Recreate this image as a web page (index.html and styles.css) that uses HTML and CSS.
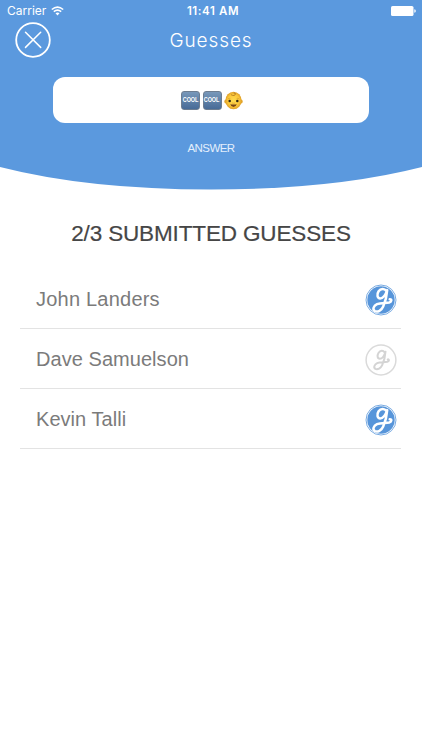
FILE: index.html
```
<!DOCTYPE html>
<html lang="en">
<head>
<meta charset="utf-8">
<title>Guesses</title>
<link rel="stylesheet" href="styles.css">
</head>
<body>
<header class="hero">
  <svg class="curve" viewBox="0 0 422 190"><path d="M0 0H422V167Q334 189.5 211 189.5Q88 189.5 0 167Z" fill="#5b99de"/></svg>
  <div class="status">
    <span class="carrier"><span class="carrier-name">Carrier</span>
      <svg width="13" height="10" viewBox="0 0 13 10" fill="none" stroke="#fff" stroke-width="1.6"><path d="M.8 3.5Q6.5-1.2 12.2 3.5M2.8 5.7Q6.5 2.6 10.2 5.7"/><path d="M4.5 7.3Q6.5 5.8 8.5 7.3L6.5 9.5Z" fill="#fff" stroke="none"/></svg>
    </span>
    <b class="time">11:41 AM</b>
    <svg class="battery" width="25" height="10" viewBox="0 0 25 10" fill="#fff"><rect width="22.5" height="10" rx="1.6"/><path d="M23.3 3.3Q24.8 3.5 24.8 5T23.3 6.7Z"/></svg>
  </div>
  <div class="nav">
    <svg class="close" width="36" height="36" viewBox="0 0 36 36" fill="none" stroke="#fff"><circle cx="18" cy="18" r="16.8" stroke-width="1.8"/><path d="M10.5 10.2L25.7 25.4M25.7 10.2L10.5 25.4" stroke-width="1.5" stroke-linecap="round"/></svg>
    <h1 class="title">Guesses</h1>
  </div>
  <div class="answer">
    <span class="tile"><span class="cool-text">COOL</span></span>
    <span class="tile"><span class="cool-text">COOL</span></span>
    <svg width="19" height="19" viewBox="0 0 19 19">
      <radialGradient id="skin"><stop offset="0" stop-color="#ffdc50"/><stop offset=".7" stop-color="#fbc638"/><stop offset="1" stop-color="#dfa02a"/></radialGradient>
      <ellipse cx="1.8" cy="10.6" rx="1.5" ry="2" fill="#e3a52c"/><ellipse cx="17.2" cy="10.6" rx="1.5" ry="2" fill="#e3a52c"/>
      <ellipse cx="9.5" cy="9.5" rx="8.1" ry="8.7" fill="url(#skin)"/>
      <path d="M7 3.7Q10.8 5.7 11.4 3Q11.5 1.5 9.7 2" fill="none" stroke="#a06a1c" stroke-width=".7"/>
      <path d="M4 7.8Q5 7 6.3 7.5M12.7 7.5Q14 7 15 7.8" fill="none" stroke="#c98f28" stroke-width=".5"/>
      <circle cx="5.7" cy="10" r="1.25" fill="#302714"/><circle cx="13.3" cy="10" r="1.25" fill="#302714"/>
      <path d="M6.3 13.2Q9.5 14 12.7 13.2Q11.9 16 9.5 16T6.3 13.2Z" fill="#784518"/><path d="M8 11.9Q9.5 12.6 11 11.9" fill="none" stroke="#d0912a" stroke-width=".5"/>
    </svg>
  </div>
  <div class="label"><span>ANSWER</span></div>
</header>
<main>
  <h2 class="heading"><span>2/3 SUBMITTED GUESSES</span></h2>
  <ul class="list">
    <li class="row"><span class="name wide">John Landers</span>
      <svg class="badge on" width="32" height="32" viewBox="0 0 32 32">
        <g id="logo">
          <circle cx="16" cy="16" r="15" fill="none" stroke="currentColor" stroke-width=".8"/>
          <circle class="disc" cx="16" cy="16" r="13.7"/>
          <path class="script" d="M21.2 7C19.6 4.2 15.7 4.3 13.6 7.2C11.5 10.4 12.3 14.4 15.2 14.4C18 14.4 20.6 10.8 22.2 6.1C21.8 12 20.2 18 18.2 22.5C16.5 26.5 12.6 28.4 9.9 27C7 25.3 8.7 21.8 12 20.2C15.6 18.5 20.2 19.2 24.2 18.5C27 17.7 26.9 15 24.7 15.3"/>
        </g>
      </svg></li>
    <li class="row"><span class="name">Dave Samuelson</span>
      <svg class="badge off" width="32" height="32" viewBox="0 0 32 32">
        <circle cx="16" cy="16" r="14.9" fill="none" stroke="currentColor" stroke-width="1.5"/>
        <path class="script" d="M19.5 8.4C18.3 6.1 15.2 6.4 13.6 8.7C11.8 11.6 12.4 14.7 14.8 14.7C17.2 14.7 19.3 11.6 20.5 7.7C20.2 12.6 18.8 17.6 17.2 21.2C15.8 24.3 12.6 25.9 10.4 24.8C8.1 23.4 9.5 20.6 12.2 19.2C15.2 17.8 19 18.6 22.4 17.8C24.5 17.2 24.3 15 22.7 15.4"/>
      </svg></li>
    <li class="row"><span class="name">Kevin Talli</span><svg class="badge on" width="32" height="32" viewBox="0 0 32 32"><use href="#logo"/></svg></li>
  </ul>
</main>
</body>
</html>
```
FILE: styles.css
```
* { box-sizing: border-box; }
body { margin: 0; width: 422px; height: 750px; overflow: hidden; background: #fff; font-family: "Liberation Sans", Arial, sans-serif; }
.hero { position: relative; height: 190px; color: #fff; }
.curve { position: absolute; inset: 0; width: 422px; height: 190px; z-index: -1; }
.status { display: grid; grid-template-columns: 1fr auto 1fr; align-items: center; height: 22px; padding: 0 6px 0 7px; font: 12px/22px Inter, sans-serif; }
.carrier { display: flex; align-items: center; gap: 5px; }
.carrier-name { letter-spacing: 0; }
.time { margin-left: 3px; font-size: 11.5px; font-weight: 600; letter-spacing: .6px; }
.battery { justify-self: end; }
.nav { display: grid; grid-template-columns: 36px 1fr 36px; padding: 0 15px; height: 36px; }
.title { margin: 0; text-align: center; font: 300 19px/37px Inter, sans-serif; letter-spacing: .9px; }
.answer { display: flex; justify-content: center; align-items: center; gap: 2.3px; width: 316px; height: 46px; margin: 18.5px auto 0 53px; padding-top: 1px; padding-left: 2px; border-radius: 12px; background: #fff; }
.tile { display: flex; align-items: center; justify-content: center; width: 19px; height: 19px; border: 1px solid #6d7d90; border-radius: 3px; background: linear-gradient(#7898ba, #476b97); }
.cool-text { flex: none; font: bold 8px/12px "Liberation Sans", sans-serif; transform: scaleX(.68); color: #fff; }
.label { margin-top: 17.5px; text-align: center; font-size: 11.5px; line-height: 16px; letter-spacing: -.6px; color: #e3effc; }
.heading { margin: 29px 0 0; height: 30px; text-align: center; font-size: 22.5px; font-weight: 400; line-height: 30px; letter-spacing: -.14px; color: #464646; -webkit-text-stroke: .2px #464646; }
.list { list-style: none; margin: 20px 21px 0 20px; padding: 0; }
.row { display: flex; justify-content: space-between; align-items: center; height: 60px; padding: 0 4px 0 16px; border-bottom: 1px solid #e3e3e3; font-size: 20px; color: #7b7b7b; }
.name { padding-top: 2px; letter-spacing: .05px; }
.wide { letter-spacing: .22px; }
.badge { margin-top: 2px; }
.on { color: #5795da; }
.off { color: #dadada; }
.disc { fill: currentColor; }
.script { fill: none; stroke: #fff; stroke-width: 2.5; stroke-linecap: round; stroke-linejoin: round; }
.off .script { stroke: #d4d4d4; stroke-width: 2; }
```
